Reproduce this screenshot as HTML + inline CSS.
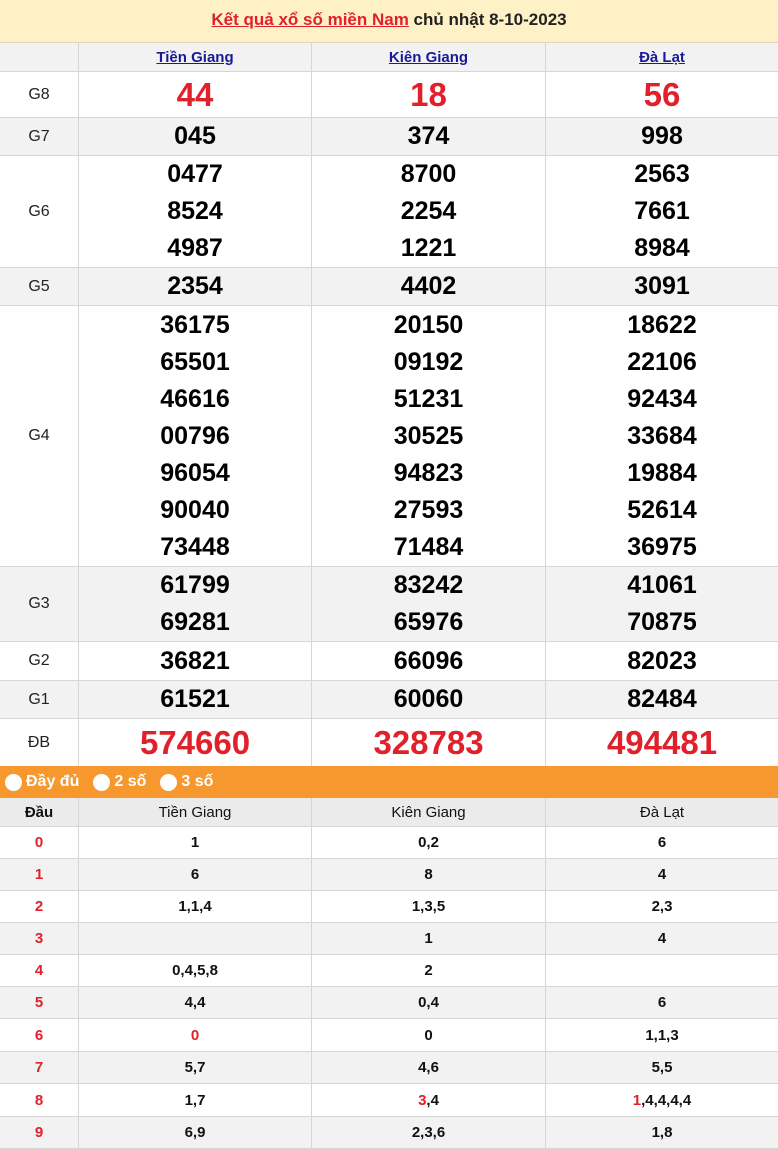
<!DOCTYPE html>
<html><head><meta charset="utf-8"><style>
*{margin:0;padding:0;box-sizing:border-box}
body{width:778px;height:1147px;overflow:hidden;background:#fff;font-family:"Liberation Sans",Arial,sans-serif;position:relative}
.r{position:absolute;left:0;width:778px;border-bottom:1px solid #d6d6d6}
.c{position:absolute;top:0;height:100%;display:flex;flex-direction:column;align-items:center;justify-content:center;border-right:1px solid #d6d6d6}
.c0{left:0;width:79px}.c1{left:79px;width:233px}.c2{left:312px;width:234px}.c3{left:546px;width:232px;border-right:none}
.lab{font-size:16px;color:#222}
.n{font-size:25px;font-weight:bold;line-height:37px;color:#000}
.g8{font-size:33px;font-weight:bold;color:#e0202a}
.db{font-size:33px;font-weight:bold;color:#e0202a}
.g{background:#f2f2f2}
.hd a{color:#1a1a99;font-size:15px;font-weight:bold;text-decoration:underline}
.t{font-size:15px;font-weight:bold;color:#111}
.red{color:#e0202a}
</style></head><body>
<div style="position:absolute;left:0;top:0;width:778px;height:43px;background:#fdf1c5;border-bottom:1px solid #e0d8b8;text-align:center;line-height:40px;font-size:17px;font-weight:bold;color:#222"><span style="color:#e0202a;text-decoration:underline">Kết quả xổ số miền Nam</span> chủ nhật 8-10-2023</div>

<div class="r g hd" style="top:43px;height:29px"><div class="c c0"></div><div class="c c1"><a>Tiền Giang</a></div><div class="c c2"><a>Kiên Giang</a></div><div class="c c3"><a>Đà Lạt</a></div></div>
<div class="r" style="top:72px;height:46px"><div class="c c0 lab">G8</div><div class="c c1 g8">44</div><div class="c c2 g8">18</div><div class="c c3 g8">56</div></div>
<div class="r g" style="top:118px;height:38px"><div class="c c0 lab">G7</div><div class="c c1 n">045</div><div class="c c2 n">374</div><div class="c c3 n">998</div></div>
<div class="r" style="top:156px;height:112px"><div class="c c0 lab">G6</div><div class="c c1 n"><div>0477</div><div>8524</div><div>4987</div></div><div class="c c2 n"><div>8700</div><div>2254</div><div>1221</div></div><div class="c c3 n"><div>2563</div><div>7661</div><div>8984</div></div></div>
<div class="r g" style="top:268px;height:38px"><div class="c c0 lab">G5</div><div class="c c1 n">2354</div><div class="c c2 n">4402</div><div class="c c3 n">3091</div></div>
<div class="r" style="top:306px;height:261px"><div class="c c0 lab">G4</div><div class="c c1 n"><div>36175</div><div>65501</div><div>46616</div><div>00796</div><div>96054</div><div>90040</div><div>73448</div></div><div class="c c2 n"><div>20150</div><div>09192</div><div>51231</div><div>30525</div><div>94823</div><div>27593</div><div>71484</div></div><div class="c c3 n"><div>18622</div><div>22106</div><div>92434</div><div>33684</div><div>19884</div><div>52614</div><div>36975</div></div></div>
<div class="r g" style="top:567px;height:75px"><div class="c c0 lab">G3</div><div class="c c1 n"><div>61799</div><div>69281</div></div><div class="c c2 n"><div>83242</div><div>65976</div></div><div class="c c3 n"><div>41061</div><div>70875</div></div></div>
<div class="r" style="top:642px;height:39px"><div class="c c0 lab">G2</div><div class="c c1 n">36821</div><div class="c c2 n">66096</div><div class="c c3 n">82023</div></div>
<div class="r g" style="top:681px;height:38px"><div class="c c0 lab">G1</div><div class="c c1 n">61521</div><div class="c c2 n">60060</div><div class="c c3 n">82484</div></div>
<div class="r" style="top:719px;height:47px;border-bottom:none"><div class="c c0 lab">ĐB</div><div class="c c1 db">574660</div><div class="c c2 db">328783</div><div class="c c3 db">494481</div></div>

<div style="position:absolute;left:0;top:766px;width:778px;height:32px;background:#f7982f;color:#fff;font-size:16px;font-weight:bold;display:flex;align-items:center;padding-left:5px">
<span style="display:inline-block;width:17px;height:17px;border-radius:50%;background:#fff;margin-right:4px"></span>Đầy đủ
<span style="display:inline-block;width:17px;height:17px;border-radius:50%;background:#fff;margin:0 4px 0 14px"></span>2 số
<span style="display:inline-block;width:17px;height:17px;border-radius:50%;background:#fff;margin:0 4px 0 14px"></span>3 số</div>

<div class="r g" style="top:798px;height:29px;background:#ebebeb"><div class="c c0 t">Đầu</div><div class="c c1 t" style="font-weight:normal">Tiền Giang</div><div class="c c2 t" style="font-weight:normal">Kiên Giang</div><div class="c c3 t" style="font-weight:normal">Đà Lạt</div></div>
<div class="r" style="top:827px;height:32px"><div class="c c0 t red">0</div><div class="c c1 t">1</div><div class="c c2 t">0,2</div><div class="c c3 t">6</div></div>
<div class="r g" style="top:859px;height:32px"><div class="c c0 t red">1</div><div class="c c1 t">6</div><div class="c c2 t">8</div><div class="c c3 t">4</div></div>
<div class="r" style="top:891px;height:32px"><div class="c c0 t red">2</div><div class="c c1 t">1,1,4</div><div class="c c2 t">1,3,5</div><div class="c c3 t">2,3</div></div>
<div class="r g" style="top:923px;height:32px"><div class="c c0 t red">3</div><div class="c c1 t"></div><div class="c c2 t">1</div><div class="c c3 t">4</div></div>
<div class="r" style="top:955px;height:32px"><div class="c c0 t red">4</div><div class="c c1 t">0,4,5,8</div><div class="c c2 t">2</div><div class="c c3 t"></div></div>
<div class="r g" style="top:987px;height:32px"><div class="c c0 t red">5</div><div class="c c1 t">4,4</div><div class="c c2 t">0,4</div><div class="c c3 t">6</div></div>
<div class="r" style="top:1019px;height:33px"><div class="c c0 t red">6</div><div class="c c1 t red">0</div><div class="c c2 t">0</div><div class="c c3 t">1,1,3</div></div>
<div class="r g" style="top:1052px;height:32px"><div class="c c0 t red">7</div><div class="c c1 t">5,7</div><div class="c c2 t">4,6</div><div class="c c3 t">5,5</div></div>
<div class="r" style="top:1084px;height:33px"><div class="c c0 t red">8</div><div class="c c1 t">1,7</div><div class="c c2 t"><span><span class="red">3</span>,4</span></div><div class="c c3 t"><span><span class="red">1</span>,4,4,4,4</span></div></div>
<div class="r g" style="top:1117px;height:32px"><div class="c c0 t red">9</div><div class="c c1 t">6,9</div><div class="c c2 t">2,3,6</div><div class="c c3 t">1,8</div></div>
</body></html>
